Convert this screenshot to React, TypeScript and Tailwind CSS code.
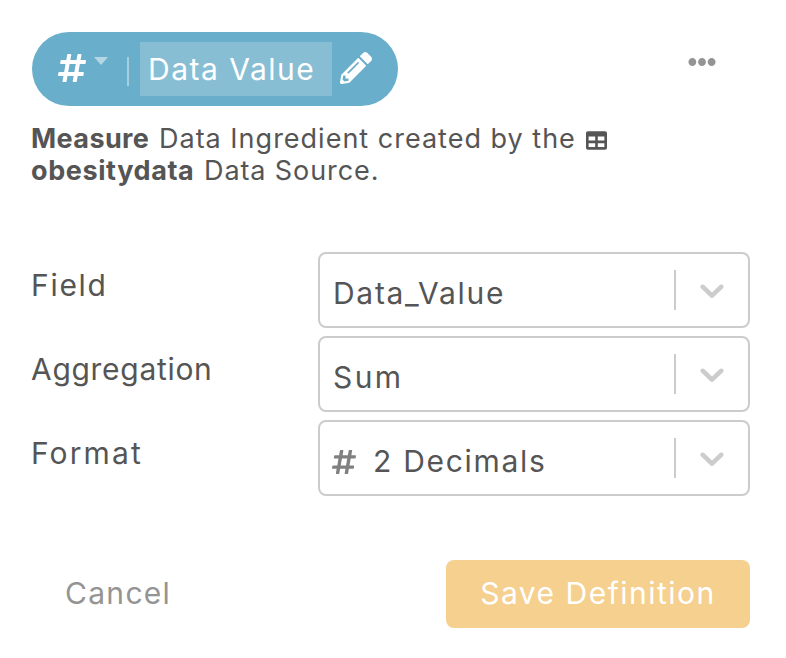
import React from "react";
import { FaHashtag, FaPencilAlt, FaTable, FaEllipsisH } from "react-icons/fa";

function Chevron() {
  return (
    <svg viewBox="0 0 20 20" className="h-10 w-10 fill-[#cccccc]">
      <path d="M4.516 7.548c0.436-0.446 1.043-0.481 1.576 0l3.908 3.747 3.908-3.747c0.533-0.481 1.141-0.446 1.574 0 0.436 0.445 0.408 1.197 0 1.615-0.406 0.418-4.695 4.502-4.695 4.502-0.217 0.223-0.502 0.335-0.787 0.335s-0.57-0.112-0.789-0.335c0 0-4.287-4.084-4.695-4.502s-0.436-1.17 0-1.615z" />
    </svg>
  );
}

function Row({ label, labelClass, children }: { label: string; labelClass: string; children: React.ReactNode }) {
  return (
    <div className="flex h-[76px] items-start">
      <div className={`-ml-px w-[287px] pt-[11px] text-[30px] leading-[44px] ${labelClass}`}>{label}</div>
      <div className="flex h-full w-[432px] items-center rounded-lg border-2 border-[#cccccc] bg-white pr-4">
        <div className="flex flex-1 items-center pt-[5px] text-[30px] leading-[44px]">{children}</div>
        <div className="h-10 w-[2px] bg-[#cccccc]" />
        <div className="ml-4">
          <Chevron />
        </div>
      </div>
    </div>
  );
}

export default function App() {
  return (
    <div className="h-[658px] w-[786px] bg-white pt-8 pr-9 pl-8 font-['Inter','Liberation_Sans',sans-serif] font-normal text-[#555555]">
      <div className="flex items-start justify-between">
        <div className="flex h-[74px] w-[366px] items-center rounded-full bg-[#69aeca] text-white">
          <FaHashtag className="ml-[26px] h-8 w-7 shrink-0 -translate-y-px" />
          <svg viewBox="0 0 14 8" className="mb-4 ml-2 h-2 w-[14px] shrink-0 fill-white/50">
            <path d="M0 0h14L7 8z" />
          </svg>
          <div className="mt-1 ml-[19px] h-[29px] w-[2px] shrink-0 bg-white/40" />
          <div className="ml-[11px] flex h-[54px] w-[192px] shrink-0 items-center bg-white/20 pt-px pl-2 text-[30px] tracking-[1.5px] whitespace-nowrap">
            Data Value
          </div>
          <FaPencilAlt className="ml-2 h-8 w-8 shrink-0 -translate-y-px" />
        </div>
        <FaEllipsisH className="mt-4 mr-[34px] h-7 w-7 text-[#949494]" />
      </div>

      <div className="mt-[17px] text-[27px] leading-8 whitespace-nowrap">
        <div className="flex items-center">
          <span className="-ml-px w-[128px] font-bold tracking-[0.4px]">Measure</span>
          <span className="w-[427px] tracking-[1px]">Data Ingredient created by the</span>
          <FaTable className="mt-[2px] h-[21px] w-[21px]" />
        </div>
        <div className="flex items-center">
          <span className="-ml-px w-[173px] font-bold tracking-[0.6px]">obesitydata</span>
          <span className="tracking-[0.9px]">Data Source.</span>
        </div>
      </div>

      <div className="mt-[65px] flex flex-col gap-2">
        <Row label="Field" labelClass="tracking-[1.7px]">
          <span className="ml-[13px] tracking-[1.7px]">Data_Value</span>
        </Row>
        <Row label="Aggregation" labelClass="tracking-[0.7px]">
          <span className="ml-[13px] tracking-[2.4px]">Sum</span>
        </Row>
        <Row label="Format" labelClass="tracking-[2.1px]">
          <FaHashtag className="mt-[2px] ml-3 h-7 w-6 text-[#808080]" />
          <span className="ml-[17px] tracking-[1.7px]">2 Decimals</span>
        </Row>
      </div>

      <div className="mt-16 flex h-[68px] items-center justify-between text-[30px]">
        <button className="ml-[33px] pb-px tracking-[1.3px] text-[#949494]">Cancel</button>
        <button className="flex h-full w-[304px] items-center justify-center rounded-lg bg-[#f6d08f] pb-px tracking-[1.5px] text-white">
          Save Definition
        </button>
      </div>
    </div>
  );
}
